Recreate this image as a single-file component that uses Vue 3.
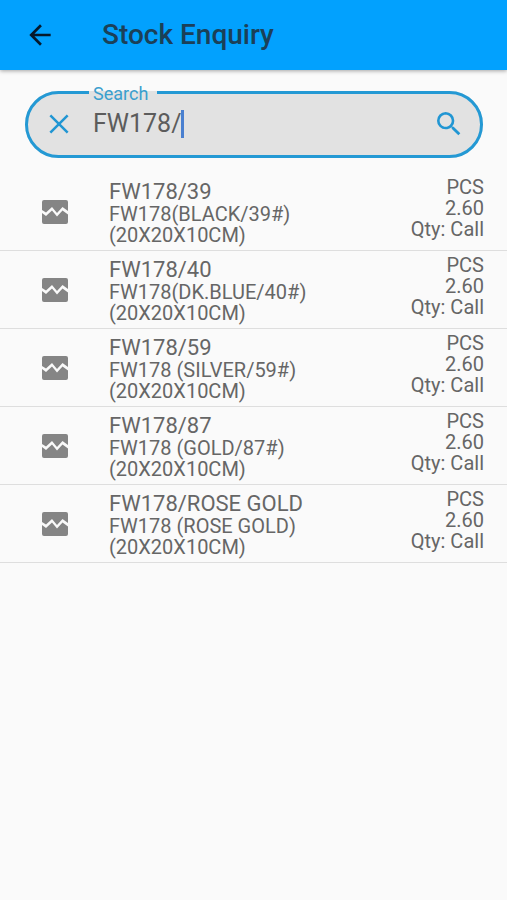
<script setup>
import { ref } from 'vue'

const query = ref('FW178/')

const items = [
  { code: 'FW178/39', name: 'FW178(BLACK/39#)', size: '(20X20X10CM)', unit: 'PCS', price: '2.60', qty: 'Call' },
  { code: 'FW178/40', name: 'FW178(DK.BLUE/40#)', size: '(20X20X10CM)', unit: 'PCS', price: '2.60', qty: 'Call' },
  { code: 'FW178/59', name: 'FW178 (SILVER/59#)', size: '(20X20X10CM)', unit: 'PCS', price: '2.60', qty: 'Call' },
  { code: 'FW178/87', name: 'FW178 (GOLD/87#)', size: '(20X20X10CM)', unit: 'PCS', price: '2.60', qty: 'Call' },
  { code: 'FW178/ROSE GOLD', name: 'FW178 (ROSE GOLD)', size: '(20X20X10CM)', unit: 'PCS', price: '2.60', qty: 'Call' },
]
</script>

<template>
  <div class="page">
    <header class="bar">
      <button class="icon-button back" type="button" aria-label="Back">
        <svg viewBox="0 0 24 24" aria-hidden="true">
          <path d="M20 11H7.83l5.59-5.59L12 4l-8 8 8 8 1.41-1.41L7.83 13H20z" />
        </svg>
      </button>
      <h1 class="title">Stock Enquiry</h1>
    </header>

    <main>
      <fieldset class="search">
        <legend class="legend"><label for="query">Search</label></legend>
        <div class="field">
          <button class="icon-button" type="button" aria-label="Clear" @click="query = ''">
            <svg viewBox="0 0 24 24" aria-hidden="true">
              <path d="M5.5 5.5l13 13M18.5 5.5l-13 13" fill="none" stroke="currentColor" stroke-width="1.9" />
            </svg>
          </button>
          <div class="entry">
            <input id="query" v-model="query" class="input" type="text" autocomplete="off" />
            <span class="caret" aria-hidden="true"></span>
          </div>
          <button class="icon-button" type="button" aria-label="Search">
            <svg viewBox="0 0 24 24" aria-hidden="true">
              <path d="M15.5 14h-.79l-.28-.27A6.47 6.47 0 0 0 16 9.5 6.5 6.5 0 1 0 9.5 16c1.61 0 3.09-.59 4.23-1.57l.27.28v.79l5 4.99L20.49 19l-4.99-5zm-6 0C7.01 14 5 11.99 5 9.5S7.01 5 9.5 5 14 7.01 14 9.5 11.99 14 9.5 14z" />
            </svg>
          </button>
        </div>
      </fieldset>

      <ul class="list">
        <li v-for="item in items" :key="item.code" class="row">
          <svg class="picture" viewBox="0 0 26 24" aria-hidden="true">
            <path d="M0 10V2a2 2 0 0 1 2-2h22a2 2 0 0 1 2 2v9l-5.500-4-5.500 6-5-6L4 12.500z" />
            <path d="M0 13l4 3 6-5.500 5 6 5.500-6 5.500 4V22a2 2 0 0 1-2 2H2a2 2 0 0 1-2-2z" />
          </svg>
          <div class="info">
            <h2 class="code">{{ item.code }}</h2>
            <p>{{ item.name }}</p>
            <p>{{ item.size }}</p>
          </div>
          <div class="stock">
            <p>{{ item.unit }}</p>
            <p>{{ item.price }}</p>
            <p>Qty: {{ item.qty }}</p>
          </div>
        </li>
      </ul>
    </main>
  </div>
</template>

<style>
body {
  margin: 0;
  background: #fafafa;
}
</style>

<style scoped>
.page {
  min-height: 100vh;
  background: #fafafa;
  color: #666;
  font-family: Roboto, "Liberation Sans", sans-serif;
}

.bar {
  display: flex;
  align-items: center;
  gap: 46px;
  height: 70px;
  padding: 0 24px;
  background: #02a1fe;
  box-shadow: 0 1px 4px rgba(0, 0, 0, 0.35);
}

.title {
  margin: 0;
  color: #1b4058;
  font-size: 28px;
  font-weight: 500;
  line-height: 34px;
}

.icon-button {
  flex: none;
  width: 32px;
  height: 32px;
  padding: 0;
  border: 0;
  background: none;
  color: #2196d3;
  cursor: pointer;
}

.icon-button svg {
  display: block;
  width: 100%;
  height: 100%;
  fill: currentColor;
}

.back {
  color: #06192c;
}

.search {
  min-width: 0;
  margin: 10px 24px 0 25px;
  padding: 0 15px 11px;
  border: 3px solid #2499d4;
  border-radius: 34px;
  background: #e2e2e2;
}

.legend {
  margin-left: 46px;
  padding: 4px 9px 0 4px;
  color: #3a9fce;
  font-size: 18px;
  line-height: 20px;
}

.legend label {
  display: block;
}

.field {
  display: flex;
  align-items: center;
  gap: 18px;
  height: 40px;
}

.entry {
  display: flex;
  flex: 1;
  align-items: center;
  min-width: 0;
}

.input {
  field-sizing: content;
  min-width: 1px;
  max-width: 100%;
  height: 32px;
  padding: 0;
  border: 0;
  outline: 0;
  background: none;
  color: #5c5c5c;
  caret-color: transparent;
  font: 25px/32px Roboto, "Liberation Sans", sans-serif;
}

.caret {
  flex: none;
  width: 3px;
  height: 28px;
  background: #4a80d0;
}

.list {
  margin: 15px 0 0;
  padding: 0;
  list-style: none;
}

.row {
  display: flex;
  align-items: center;
  padding: 0 23px 0 42px;
  border-bottom: 1px solid #dedede;
  font-size: 20px;
  line-height: 21px;
}

.row p {
  margin: 0;
}

.picture {
  flex: none;
  width: 26px;
  height: 24px;
  fill: #858585;
}

.info {
  flex: 1;
  min-width: 0;
  padding: 7px 0 4px 41px;
}

.code {
  margin: 0;
  font-size: 22px;
  font-weight: 400;
  line-height: 24px;
}

.stock {
  align-self: flex-start;
  padding-top: 4px;
  text-align: right;
}
</style>
